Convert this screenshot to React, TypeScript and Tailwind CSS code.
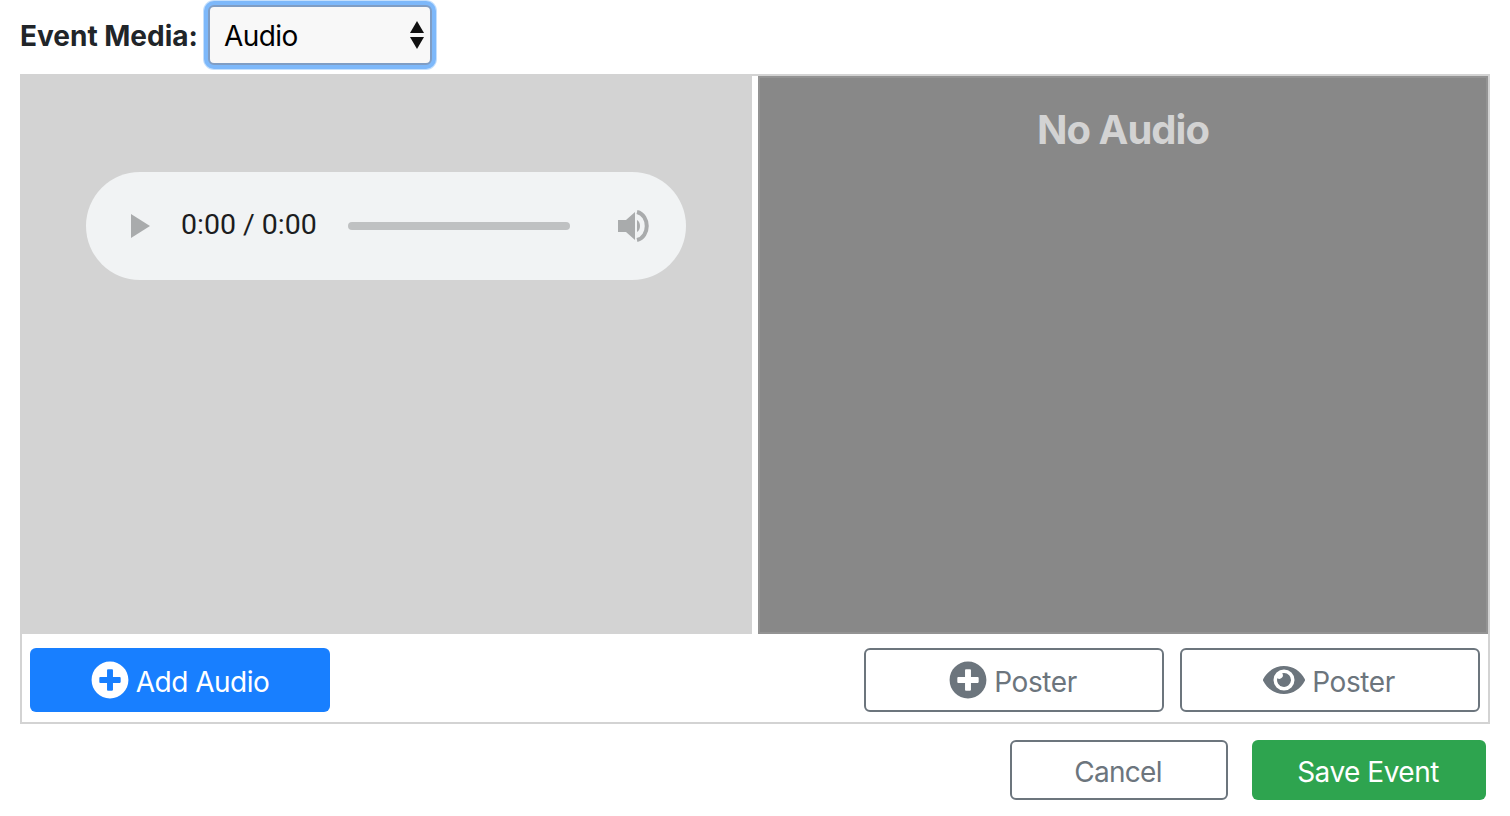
import React from 'react';
import { FaPlusCircle, FaEye } from 'react-icons/fa';

function OutlineButton({ icon, label, className }: { icon: React.ReactNode; label: string; className?: string }) {
  return (
    <button className={`flex h-[64px] w-[300px] items-center justify-center gap-[7px] rounded-[6px] border-2 border-[#6c757d] bg-white text-[28px] tracking-[-0.4px] text-[#6c757d] ${className ?? ''}`}>
      {icon}
      <span className="pt-[3px]">{label}</span>
    </button>
  );
}

function AudioPlayer() {
  return (
    <div className="ml-[-2px] flex h-[108px] w-[600px] items-center rounded-[54px] bg-[#f1f3f4] pr-[36px] pl-[45px]">
      <svg width="19" height="24" viewBox="0 0 19 24" className="shrink-0">
        <path d="M0 0L19 12L0 24Z" fill="#a9abac" />
      </svg>
      <span className="ml-[31px] w-[135px] pb-[2px] font-['Roboto',sans-serif] text-[28.5px] leading-none whitespace-nowrap text-[#1c1d1e]">0:00 / 0:00</span>
      <div className="ml-[32px] h-[8px] w-[222px] rounded-full bg-[#bfc1c2]" />
      <svg width="32" height="32" viewBox="0 0 32 32" className="ml-[48px] shrink-0">
        <path d="M0 10H8L17 2V30L8 22H0Z" fill="#a9abac" />
        <path d="M19 10C23 12 23 20 19 22Z" fill="#a9abac" />
        <path d="M19 2C32 5 32 27 19 30" fill="none" stroke="#a9abac" strokeWidth="4" />
      </svg>
    </div>
  );
}

export default function App() {
  return (
    <div className="h-[816px] w-[1510px] overflow-hidden bg-white font-['Inter',sans-serif]">
      <div className="flex h-[74px] items-start pl-[20px]">
        <label className="mt-[18px] w-[178px] text-[28px] leading-[36px] font-bold whitespace-nowrap text-[#212529]">Event Media:</label>
        <div className="mt-[5px] ml-[10px] flex h-[60px] w-[224px] items-center justify-between rounded-[6px] border-2 border-[#7f9dc4] bg-[#f8f8f8] pr-[5px] pl-[14px] shadow-[0_0_0_4px_#7db8fa,0_0_0_5px_#c4dffc]">
          <span className="pt-[2px] text-[28px] tracking-[-0.6px] text-black">Audio</span>
          <svg width="16" height="30" viewBox="0 0 16 30">
            <path d="M8 1L15 13H1Z" fill="#111" />
            <path d="M1 17H15L8 29Z" fill="#111" />
          </svg>
        </div>
      </div>

      <div className="mx-[20px] h-[650px] w-[1470px] border-2 border-[#d3d3d3]">
        <div className="flex h-[558px] gap-[6px]">
          <div className="flex w-[730px] justify-center bg-[#d3d3d3] pt-[96px]">
            <AudioPlayer />
          </div>
          <div className="w-[730px] border-2 border-[#939393] bg-[#888888] pt-[26px] text-center">
            <h3 className="text-[40px] leading-[52px] font-bold tracking-[-1px] text-[#d3d3d3]">No Audio</h3>
          </div>
        </div>
        <div className="flex items-start justify-between px-[8px] pt-[14px]">
          <button className="flex h-[64px] w-[300px] items-center justify-center gap-[7px] rounded-[6px] bg-[#187fff] text-[28px] tracking-[-0.5px] text-white">
            <FaPlusCircle size={38} />
            <span className="pt-[3px]">Add Audio</span>
          </button>
          <div className="flex gap-[16px]">
            <OutlineButton icon={<FaPlusCircle size={38} />} label="Poster" className="pr-[2px]" />
            <OutlineButton icon={<FaEye size={42} />} label="Poster" className="pr-[2px]" />
          </div>
        </div>
      </div>

      <div className="mt-[16px] flex justify-end gap-[24px] pr-[24px]">
        <button className="h-[60px] w-[218px] rounded-[6px] border-2 border-[#6c757d] bg-white pt-[3px] pr-[2px] text-[28px] tracking-[-0.7px] text-[#6c757d]">Cancel</button>
        <button className="h-[60px] w-[234px] rounded-[6px] bg-[#2ea44f] pt-[3px] pr-[2px] text-[28px] tracking-[-0.5px] text-white">Save Event</button>
      </div>
    </div>
  );
}
